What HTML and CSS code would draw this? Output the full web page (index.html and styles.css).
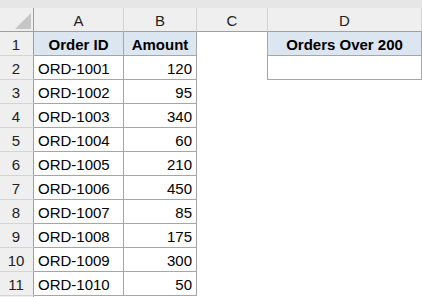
FILE: index.html
```html
<!DOCTYPE html>
<html>
<head>
<meta charset="utf-8">
<link rel="stylesheet" href="styles.css">
</head>
<body>
<div class="ribbon"></div>
<div class="sheet">
  <div class="corner hdr"><svg class="tri" width="16" height="16" viewBox="0 0 16 16"><polygon points="16,0 16,16 0,16" fill="#c6c6c6"/></svg></div>
  <div class="colhdr">A</div>
  <div class="colhdr">B</div>
  <div class="colhdr">C</div>
  <div class="colhdr">D</div>
  <div class="colhdr last"></div>

  <div class="rowhdr">1</div>
  <div class="cell tb th">Order ID</div>
  <div class="cell tb th">Amount</div>
  <div class="cell c edge"></div>
  <div class="cell tb th">Orders Over 200</div>
  <div class="cell"></div>

  <div class="rowhdr">2</div>
  <div class="cell tb">ORD-1001</div>
  <div class="cell tb num">120</div>
  <div class="cell c edge"></div>
  <div class="cell tb"></div>
  <div class="cell"></div>

  <div class="rowhdr">3</div>
  <div class="cell tb">ORD-1002</div>
  <div class="cell tb num">95</div>
  <div class="cell"></div>
  <div class="cell"></div>
  <div class="cell"></div>

  <div class="rowhdr">4</div>
  <div class="cell tb">ORD-1003</div>
  <div class="cell tb num">340</div>
  <div class="cell"></div>
  <div class="cell"></div>
  <div class="cell"></div>

  <div class="rowhdr">5</div>
  <div class="cell tb">ORD-1004</div>
  <div class="cell tb num">60</div>
  <div class="cell"></div>
  <div class="cell"></div>
  <div class="cell"></div>

  <div class="rowhdr">6</div>
  <div class="cell tb">ORD-1005</div>
  <div class="cell tb num">210</div>
  <div class="cell"></div>
  <div class="cell"></div>
  <div class="cell"></div>

  <div class="rowhdr">7</div>
  <div class="cell tb">ORD-1006</div>
  <div class="cell tb num">450</div>
  <div class="cell"></div>
  <div class="cell"></div>
  <div class="cell"></div>

  <div class="rowhdr">8</div>
  <div class="cell tb">ORD-1007</div>
  <div class="cell tb num">85</div>
  <div class="cell"></div>
  <div class="cell"></div>
  <div class="cell"></div>

  <div class="rowhdr">9</div>
  <div class="cell tb">ORD-1008</div>
  <div class="cell tb num">175</div>
  <div class="cell"></div>
  <div class="cell"></div>
  <div class="cell"></div>

  <div class="rowhdr">10</div>
  <div class="cell tb">ORD-1009</div>
  <div class="cell tb num">300</div>
  <div class="cell"></div>
  <div class="cell"></div>
  <div class="cell"></div>

  <div class="rowhdr">11</div>
  <div class="cell tb">ORD-1010</div>
  <div class="cell tb num">50</div>
  <div class="cell"></div>
  <div class="cell"></div>
  <div class="cell"></div>

  <div class="rowhdr stub"></div>
  <div class="cell stub"></div>
  <div class="cell stub"></div>
  <div class="cell stub"></div>
  <div class="cell stub"></div>
  <div class="cell stub"></div>
</div>
</body>
</html>
```
FILE: styles.css
```css
html, body {
  margin: 0;
  padding: 0;
  background: #ffffff;
  overflow: hidden;
}
body {
  width: 422px;
  height: 297px;
  font-family: "Liberation Sans", Arial, sans-serif;
  font-size: 15px;
  color: #000;
}
.ribbon {
  height: 8px;
  background: #e6e6e6;
}
.sheet {
  display: grid;
  grid-template-columns: 34px 90px 73px 71px 154px 0px;
  grid-template-rows: repeat(12, 24px) 1px;
}
.sheet > div {
  box-sizing: border-box;
  display: flex;
  align-items: flex-end;
  line-height: 17px;
  padding-bottom: 2px;
  white-space: nowrap;
  overflow: hidden;
}
.sheet > .stub {
  padding: 0;
  border: none;
}
.hdr, .colhdr, .rowhdr {
  background: #efefef;
  color: #222;
}
.corner {
  border-right: 1px solid #9f9f9f;
  border-bottom: 1px solid #9f9f9f;
  position: relative;
}
.tri {
  position: absolute;
  left: 15px;
  top: 5px;
}
.colhdr {
  justify-content: center;
  border-right: 1px solid #d4d4d4;
  border-bottom: 1px solid #9f9f9f;
}
.colhdr.last {
  border-right: none;
}
.rowhdr {
  justify-content: center;
  border-right: 1px solid #9f9f9f;
  border-bottom: 1px solid #d4d4d4;
  padding-right: 1px;
}
.rowhdr.stub {
  border-right: 1px solid #9f9f9f;
}
.cell {
  padding-left: 4px;
  padding-right: 4px;
}
.cell.tb {
  border-right: 1px solid #a6a6a6;
  border-bottom: 1px solid #a6a6a6;
}
.cell.edge {
  border-right: 1px solid #a6a6a6;
}
.cell.th {
  background: #dce6f1;
  font-weight: bold;
  justify-content: center;
}
.cell.num {
  justify-content: flex-end;
}
```
